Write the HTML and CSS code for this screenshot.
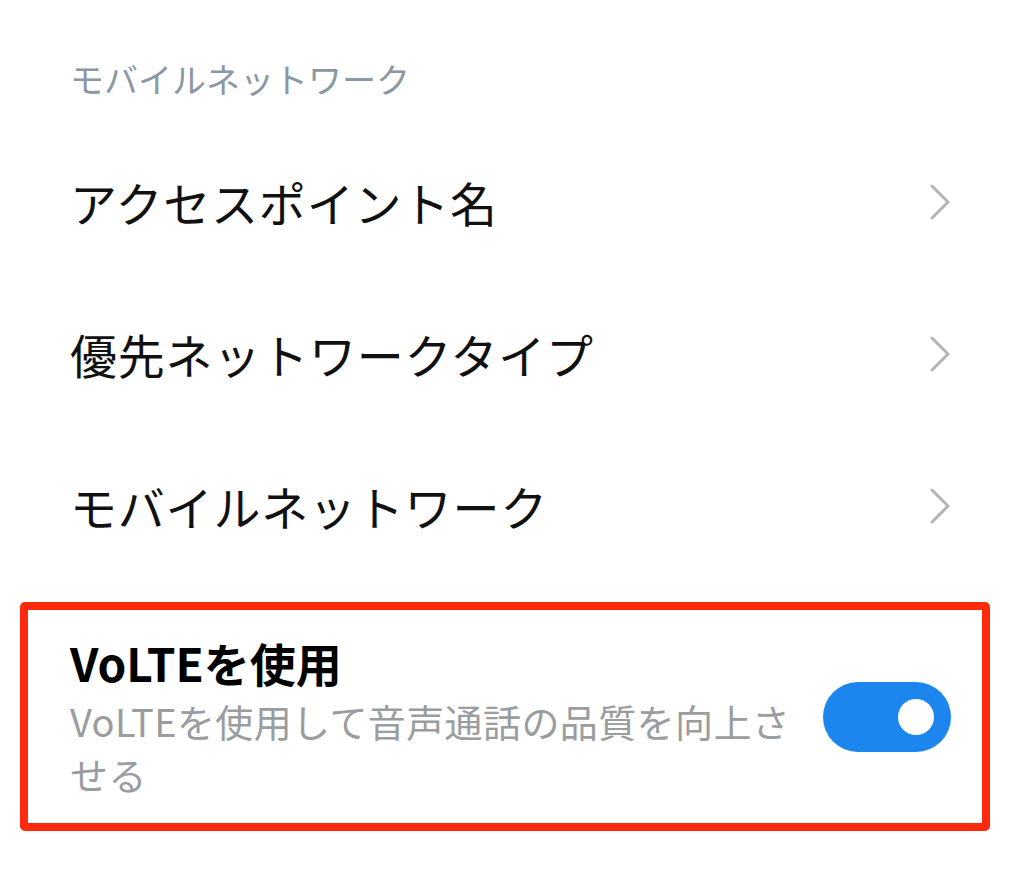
FILE: index.html
```html
<!DOCTYPE html>
<html lang="ja">
<head>
  <meta charset="UTF-8">
  <meta name="viewport" content="width=device-width, initial-scale=1.0">
  <title>モバイルネットワーク</title>
  <link rel="stylesheet" href="styles.css">
</head>
<body>
  <div class="settings">
    <h2 class="section-title">モバイルネットワーク</h2>

    <a class="row" href="#">
      <span class="row-label">アクセスポイント名</span>
      <svg class="chevron" width="20" height="36" viewBox="0 0 20 36"><polyline points="2,2 18,18 2,34" /></svg>
    </a>
    <a class="row" href="#">
      <span class="row-label">優先ネットワークタイプ</span>
      <svg class="chevron" width="20" height="36" viewBox="0 0 20 36"><polyline points="2,2 18,18 2,34" /></svg>
    </a>
    <a class="row" href="#">
      <span class="row-label">モバイルネットワーク</span>
      <svg class="chevron" width="20" height="36" viewBox="0 0 20 36"><polyline points="2,2 18,18 2,34" /></svg>
    </a>

    <div class="highlight">
      <div class="toggle-row">
        <div class="toggle-text">
          <div class="toggle-title">VoLTEを使用</div>
          <div class="toggle-desc">VoLTEを使用して音声通話の品質を向上させる</div>
        </div>
        <span class="switch on"><span class="knob"></span></span>
      </div>
    </div>
  </div>
</body>
</html>
```

FILE: styles.css
```css
body {
  margin: 0;
  background: #fff;
  font-family: "Noto Sans CJK JP", "Noto Sans", sans-serif;
}
.settings {
  width: 1024px;
}
.section-title {
  margin: 53px 0 22px 70px;
  font-size: 34px;
  font-weight: normal;
  line-height: 51px;
  color: #8b97a3;
}
.row {
  display: flex;
  align-items: center;
  justify-content: space-between;
  height: 152px;
  padding: 0 74px 0 70px;
  color: #111;
  text-decoration: none;
}
.row-label {
  font-size: 47px;
  line-height: 60px;
  letter-spacing: 0.8px;
}
.chevron polyline {
  fill: none;
  stroke: #b3b5b8;
  stroke-width: 3;
  stroke-linecap: round;
  stroke-linejoin: round;
}
.highlight {
  margin: 20px 0 0 20px;
  width: 954px;
  height: 213px;
  border: 8px solid #ff2a0c;
  border-radius: 5px;
}
.toggle-row {
  display: flex;
  align-items: center;
  height: 100%;
  padding: 0 31px 0 42px;
}
.toggle-text {
  flex: 1;
  padding-right: 28px;
}
.toggle-title {
  font-size: 46px;
  font-weight: bold;
  line-height: 56px;
  color: #000;
}
.toggle-desc {
  margin-top: 4px;
  font-size: 38px;
  line-height: 53px;
  letter-spacing: 0.4px;
  color: #9a9d9f;
}
.switch {
  display: flex;
  align-items: center;
  justify-content: flex-end;
  flex-shrink: 0;
  width: 128px;
  height: 70px;
  padding-right: 17px;
  box-sizing: border-box;
  border-radius: 35px;
  background: #1c86ee;
}
.knob {
  width: 36px;
  height: 36px;
  border-radius: 50%;
  background: #fff;
}
```
